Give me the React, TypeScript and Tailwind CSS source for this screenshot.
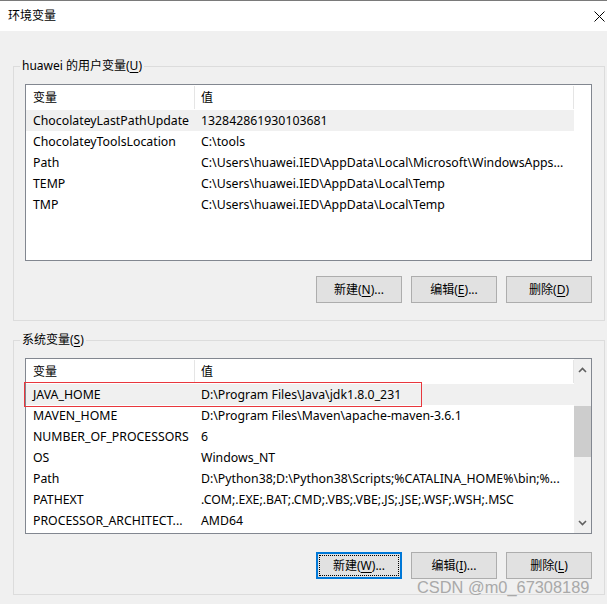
import React from "react";

type Row = { name: string; value: string };

const userVars: Row[] = [
  { name: "ChocolateyLastPathUpdate", value: "132842861930103681" },
  { name: "ChocolateyToolsLocation", value: "C:\\tools" },
  { name: "Path", value: "C:\\Users\\huawei.IED\\AppData\\Local\\Microsoft\\WindowsApps..." },
  { name: "TEMP", value: "C:\\Users\\huawei.IED\\AppData\\Local\\Temp" },
  { name: "TMP", value: "C:\\Users\\huawei.IED\\AppData\\Local\\Temp" },
];

const sysVars: Row[] = [
  { name: "JAVA_HOME", value: "D:\\Program Files\\Java\\jdk1.8.0_231" },
  { name: "MAVEN_HOME", value: "D:\\Program Files\\Maven\\apache-maven-3.6.1" },
  { name: "NUMBER_OF_PROCESSORS", value: "6" },
  { name: "OS", value: "Windows_NT" },
  { name: "Path", value: "D:\\Python38;D:\\Python38\\Scripts;%CATALINA_HOME%\\bin;%..." },
  { name: "PATHEXT", value: ".COM;.EXE;.BAT;.CMD;.VBS;.VBE;.JS;.JSE;.WSF;.WSH;.MSC" },
  { name: "PROCESSOR_ARCHITECT...", value: "AMD64" },
];

function Chevron({ up }: { up?: boolean }) {
  return (
    <svg width="9" height="6" viewBox="0 0 9 6" className={up ? "" : "rotate-180"}>
      <path d="M1 5 L4.5 1.5 L8 5" fill="none" stroke="#606060" strokeWidth="1.6" />
    </svg>
  );
}

function VarList({
  rows,
  height,
  scroll,
  marked,
}: {
  rows: Row[];
  height: string;
  scroll?: boolean;
  marked?: boolean;
}) {
  return (
    <div className={`relative ml-[5px] w-[567px] ${height} border border-[#828790] bg-white flex`}>
      <div className="w-[548px] flex flex-col">
        <div className="flex h-[25px] items-center">
          <div className="w-[168px] pl-[7px]">变量</div>
          <div className="w-px self-stretch bg-[#e5e5e5] my-[1px]" />
          <div className="flex-1 pl-[6px]">值</div>
          <div className="w-px self-stretch bg-[#e5e5e5] my-[1px]" />
        </div>
        {rows.map((r, i) => (
          <div
            key={r.name + i}
            className={`flex h-[21px] items-center whitespace-nowrap text-[12.3px] ${i === 0 ? "bg-[#f0f0f0]" : ""}`}
          >
            <div className="w-[169px] pl-[7px] overflow-hidden">{r.name}</div>
            <div className="flex-1 pl-[6px] overflow-hidden">{r.value}</div>
          </div>
        ))}
      </div>
      {scroll ? (
        <div className="w-[17px] bg-[#f0f0f0] flex flex-col">
          <div className="h-[19px] flex items-center justify-center pt-[2px]">
            <Chevron up />
          </div>
          <div className="h-[28px]" />
          <div className="h-[51px] bg-[#cdcdcd]" />
          <div className="flex-1" />
          <div className="h-[19px] flex items-center justify-center pb-[2px]">
            <Chevron />
          </div>
        </div>
      ) : (
        <div className="w-[17px]" />
      )}
      {marked && (
        <div className="absolute left-[-2px] top-[23px] w-[398px] h-[25px] border border-[#e8373d] pointer-events-none" />
      )}
    </div>
  );
}

function Btn({ label, mn, tail, focused }: { label: string; mn: string; tail: string; focused?: boolean }) {
  return (
    <div
      className={`w-[86px] h-[27px] flex items-center justify-center bg-[#e1e1e1] ${
        focused
          ? "border-2 border-[#0078d7] outline-1 outline-dotted outline-black outline-offset-[-4px]"
          : "border border-[#adadad]"
      }`}
    >
      {label}(<span className="underline underline-offset-2">{mn}</span>){tail}
    </div>
  );
}

export default function App() {
  return (
    <div
      className="relative w-[607px] h-[604px] overflow-hidden bg-[#f0f0f0] text-[12px] leading-[16px] text-black"
      style={{ fontFamily: '"Noto Sans", "Noto Sans CJK SC", sans-serif' }}
    >
      <div className="h-[31px] bg-white border-t border-[#7a7a7a] flex items-center justify-between pl-[8px] pr-[2px]">
        <span>环境变量</span>
        <svg width="11" height="11" viewBox="0 0 11 11">
          <path d="M0.5 0.5 L10.5 10.5 M10.5 0.5 L0.5 10.5" stroke="#000" strokeWidth="1" />
        </svg>
      </div>

      <div className="pl-[13px] pt-[27px]">
        <fieldset className="w-[591px] border border-[#dcdcdc] pl-[6px] pr-[12px] pb-[17px]">
          <legend className="px-[2px] leading-[16px]">
            huawei 的用户变量(<span className="underline underline-offset-2">U</span>)
          </legend>
          <div className="mt-[10px]">
            <VarList rows={userVars} height="h-[177px]" />
          </div>
          <div className="mt-[15px] flex justify-end gap-[9px]">
            <Btn label="新建" mn="N" tail="..." />
            <Btn label="编辑" mn="E" tail="..." />
            <Btn label="删除" mn="D" tail="" />
          </div>
        </fieldset>

        <fieldset className="mt-[11px] w-[591px] border border-[#dcdcdc] pl-[6px] pr-[12px] pb-[15px]">
          <legend className="px-[2px] leading-[16px]">
            系统变量(<span className="underline underline-offset-2">S</span>)
          </legend>
          <div className="mt-[10px]">
            <VarList rows={sysVars} height="h-[176px]" scroll marked />
          </div>
          <div className="mt-[18px] flex justify-end gap-[9px]">
            <Btn label="新建" mn="W" tail="..." focused />
            <Btn label="编辑" mn="I" tail="..." />
            <Btn label="删除" mn="L" tail="" />
          </div>
        </fieldset>
      </div>

      <div
        className="absolute left-[417px] top-[578px] text-[16.4px] leading-[18px] text-[#a9a9a9] whitespace-nowrap"
        style={{ fontFamily: '"Liberation Sans", Arial, sans-serif' }}
      >
        CSDN @m0_67308189
      </div>
    </div>
  );
}
